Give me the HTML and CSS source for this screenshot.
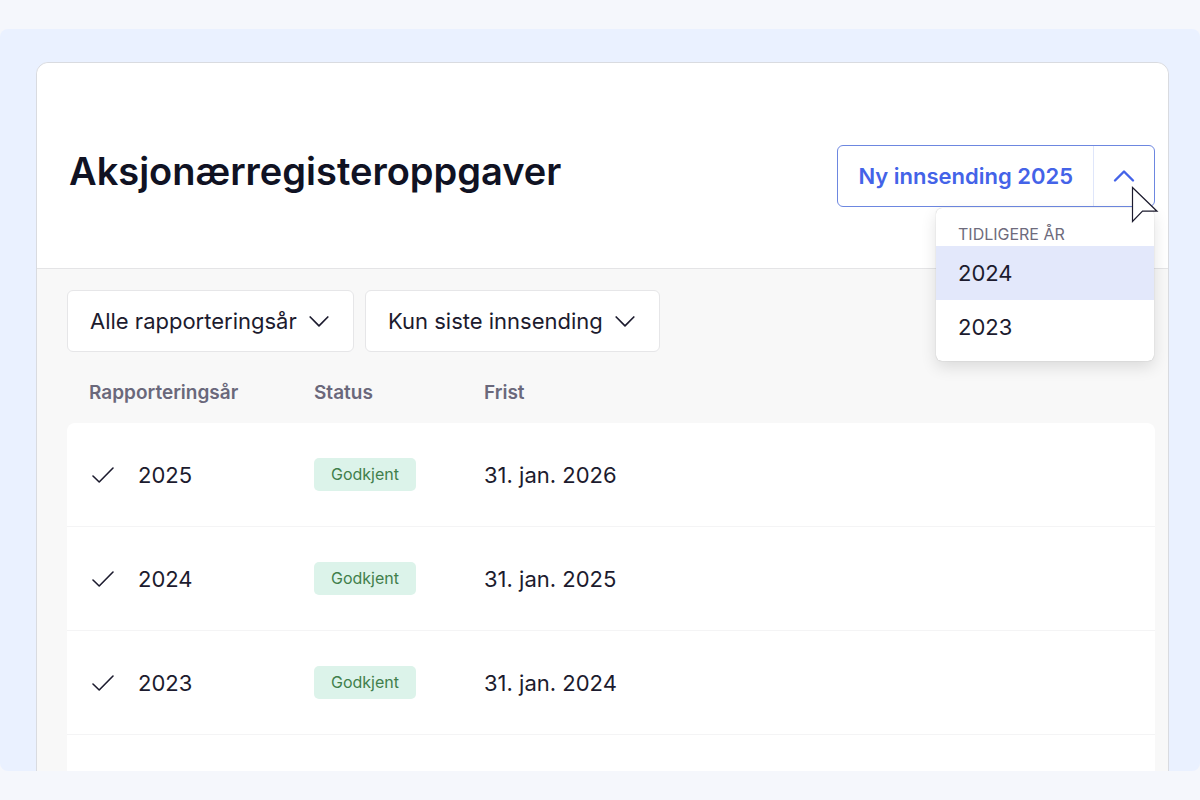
FILE: index.html
```html
<!DOCTYPE html>
<html lang="nb">
<head>
<meta charset="UTF-8" />
<meta name="viewport" content="width=device-width, initial-scale=1" />
<title>Aksjonærregisteroppgaver</title>
<link rel="stylesheet" href="styles.css">
</head>
<body>
<div class="stage">
  <main class="card">
    <header class="card-header">
      <h1>Aksjonærregisteroppgaver</h1>

      <div class="split-button">
        <button type="button" class="split-main">Ny innsending 2025</button>
        <button type="button" class="split-toggle" aria-label="Tidligere år" aria-expanded="true">
          <svg width="22" height="14" viewBox="0 0 22 14" fill="none" stroke="currentColor" stroke-width="2.4" stroke-linecap="round" stroke-linejoin="round"><path d="M2 11.5 11 2.5l9 9"/></svg>
        </button>

        <div class="menu">
          <div class="menu-title">TIDLIGERE ÅR</div>
          <button type="button" class="menu-item active">2024</button>
          <button type="button" class="menu-item">2023</button>
        </div>

        <!-- mouse pointer -->
        <svg class="pointer" width="28" height="38" viewBox="0 0 28 38" fill="#fff" stroke="#1c1b2e" stroke-width="1.2"><path d="M1.5 1.5v34l10-10.3h14.5z"/></svg>
      </div>
    </header>

    <section class="content">
      <div class="filters">
        <div class="filter">
          <select aria-label="Rapporteringsår">
            <option>Alle rapporteringsår</option>
          </select>
          <svg width="20" height="12" viewBox="0 0 20 12" fill="none" stroke="currentColor" stroke-width="1.7" stroke-linecap="round" stroke-linejoin="round"><path d="M1.2 2 10 10.8 18.8 2"/></svg>
        </div>
        <div class="filter">
          <select aria-label="Innsending">
            <option>Kun siste innsending</option>
          </select>
          <svg width="20" height="12" viewBox="0 0 20 12" fill="none" stroke="currentColor" stroke-width="1.7" stroke-linecap="round" stroke-linejoin="round"><path d="M1.2 2 10 10.8 18.8 2"/></svg>
        </div>
      </div>

      <table class="reports">
        <thead>
          <tr>
            <th class="col-year">Rapporteringsår</th>
            <th class="col-status">Status</th>
            <th>Frist</th>
          </tr>
        </thead>
        <tbody>
          <tr>
            <td>
              <div class="year">
                <svg width="22" height="17" viewBox="0 0 22 17" fill="none" stroke="currentColor" stroke-width="1.6" stroke-linecap="round" stroke-linejoin="round"><path d="M1 10 7.2 16 21 2"/></svg>
                2025
              </div>
            </td>
            <td><span class="badge">Godkjent</span></td>
            <td>31. jan. 2026</td>
          </tr>
          <tr>
            <td>
              <div class="year">
                <svg width="22" height="17" viewBox="0 0 22 17" fill="none" stroke="currentColor" stroke-width="1.6" stroke-linecap="round" stroke-linejoin="round"><path d="M1 10 7.2 16 21 2"/></svg>
                2024
              </div>
            </td>
            <td><span class="badge">Godkjent</span></td>
            <td>31. jan. 2025</td>
          </tr>
          <tr>
            <td>
              <div class="year">
                <svg width="22" height="17" viewBox="0 0 22 17" fill="none" stroke="currentColor" stroke-width="1.6" stroke-linecap="round" stroke-linejoin="round"><path d="M1 10 7.2 16 21 2"/></svg>
                2023
              </div>
            </td>
            <td><span class="badge">Godkjent</span></td>
            <td>31. jan. 2024</td>
          </tr>
          <tr>
            <td></td>
            <td></td>
            <td></td>
          </tr>
        </tbody>
      </table>
    </section>
  </main>
</div>
</body>
</html>
```
FILE: styles.css
```css
* {
    box-sizing: border-box;
}

body {
    margin: 0;
    background: #f5f7fc;
    color: #1c1b2e;
    font-family: Inter, "Liberation Sans", sans-serif;
    font-size: 22px;
}

button,
select {
    margin: 0;
    padding: 0;
    border: 0;
    background: none;
    color: inherit;
    font: inherit;
    cursor: pointer;
}

svg {
    display: block;
    flex-shrink: 0;
}

.stage {
    height: calc(100vh - 58px);
    margin: 29px 0;
    padding: 33px 31px 0 36px;
    background: #eaf1ff;
    border-radius: 8px;
    overflow: hidden;
}

.card {
    background: #f8f8f8;
    border: 1px solid #d9dbe0;
    border-radius: 12px;
}

.card-header {
    display: flex;
    justify-content: space-between;
    align-items: flex-start;
    padding: 82px 13px 61px 32px;
    background: #fff;
    border-bottom: 1px solid #e4e4e6;
    border-radius: 12px 12px 0 0;
}

h1 {
    margin: 0;
    color: #101223;
    font-size: 38px;
    font-weight: 600;
    line-height: 52px;
}

.split-button {
    position: relative;
    display: flex;
    height: 62px;
    border: 1px solid #6d87e0;
    border-radius: 6px;
    color: #4463e8;
}

.split-main {
    padding: 0 20px;
    font-weight: 600;
}

.split-toggle {
    display: flex;
    align-items: center;
    justify-content: center;
    width: 61px;
    border-left: 1px solid #dfe6fa;
}

.menu {
    position: absolute;
    top: 62px;
    right: 0;
    z-index: 1;
    width: 218px;
    padding: 14px 0 7px;
    background: #fff;
    border-radius: 6px;
    box-shadow: 0 0 1px rgba(0, 0, 0, 0.3), 0 6px 16px rgba(0, 0, 0, 0.12);
    color: #1c1b2e;
}

.menu-title {
    padding: 0 22px;
    color: #6e6b7c;
    font-size: 16px;
    line-height: 24px;
}

.menu-item {
    display: block;
    width: 100%;
    height: 54px;
    padding: 0 22px;
    text-align: left;
}

.menu-item.active {
    background: #e3e8fb;
}

.pointer {
    position: absolute;
    top: 40px;
    right: -5px;
    z-index: 2;
    pointer-events: none;
}

.content {
    padding: 21px 13px 0 30px;
}

.filters {
    display: flex;
    gap: 11px;
}

.filter {
    display: flex;
    align-items: center;
    gap: 12px;
    height: 62px;
    padding: 0 24px 0 22px;
    background: #fff;
    border: 1px solid #e6e6e8;
    border-radius: 6px;
}

.filter select {
    appearance: none;
    height: 60px;
}

.reports {
    width: 100%;
    border-collapse: separate;
    border-spacing: 0;
    table-layout: fixed;
}

.reports th {
    height: 71px;
    padding: 10px 0 0 22px;
    color: #6a687b;
    font-size: 19px;
    font-weight: 600;
    text-align: left;
}

.reports td {
    height: 104px;
    padding: 0 0 0 22px;
    background: #fff;
    border-bottom: 1px solid #f4f4f5;
}

.reports th + th,
.reports td + td {
    padding-left: 0;
}

.reports tbody tr:first-child td:first-child {
    border-top-left-radius: 8px;
}

.reports tbody tr:first-child td:last-child {
    border-top-right-radius: 8px;
}

.col-year {
    width: 247px;
}

.col-status {
    width: 170px;
}

.year {
    display: flex;
    align-items: center;
    gap: 24px;
    padding-left: 3px;
}

.badge {
    display: block;
    width: fit-content;
    padding: 0 17px;
    background: #dcf3ea;
    border-radius: 5px;
    color: #417f4c;
    font-size: 16px;
    line-height: 33px;
}
```
